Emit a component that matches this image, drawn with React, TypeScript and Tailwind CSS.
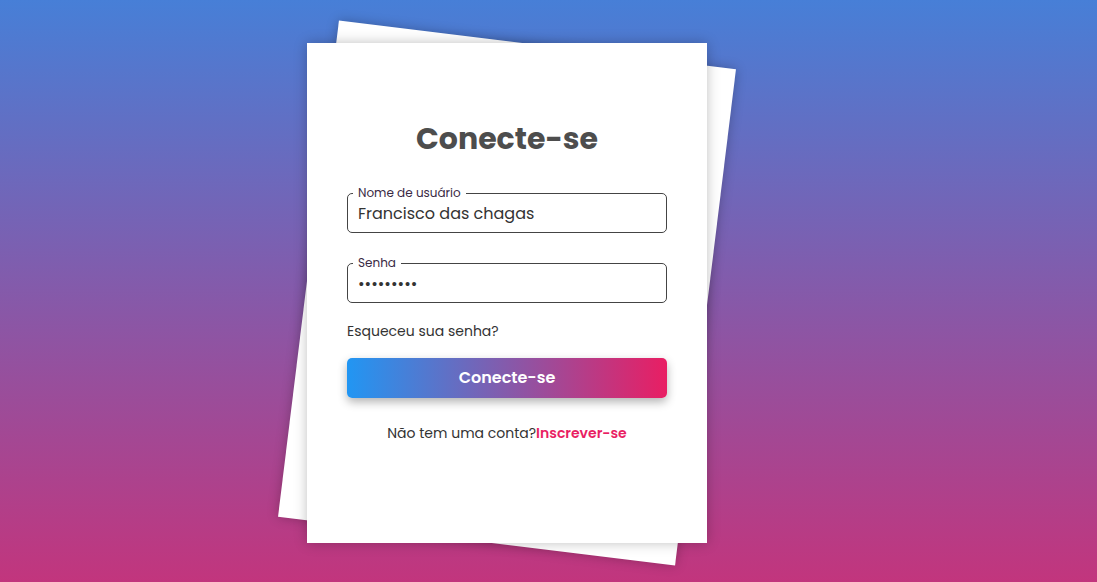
import { useState } from 'react'

const font = { fontFamily: 'Poppins, "Noto Sans", "DejaVu Sans", sans-serif' }

function Field({ label, type, value, onChange }: { label: string; type: string; value: string; onChange: (v: string) => void }) {
  return (
    <fieldset className="border border-[#444] rounded-[5px] px-[5px] pb-[6px] m-0">
      <legend className="px-[5px] text-[12px] leading-[14px] text-[#3a2a44]">{label}</legend>
      <input
        type={type}
        value={value}
        onChange={e => onChange(e.target.value)}
        className="w-full h-[26px] px-[5px] text-[16px] text-[#333] outline-none bg-transparent"
        style={font}
      />
    </fieldset>
  )
}

export default function App() {
  const [user, setUser] = useState('Francisco das chagas')
  const [pass, setPass] = useState('123456789')

  return (
    <div
      className="h-screen w-full flex items-center justify-center pr-[83px] pt-[4px] bg-linear-to-b/srgb from-[#477fd7] to-[#c2357d]"
      style={font}
    >
      <div className="relative w-[400px] h-[500px]">
        <div className="absolute inset-0 bg-white rotate-[7deg] shadow-[0_0_12px_rgba(0,0,0,0.25)]" />
        <div className="relative h-full bg-white shadow-[0_0_12px_rgba(0,0,0,0.25)] px-[40px] pt-[78px]">
          <h1 className="text-center text-[30px] leading-[36px] font-bold text-[#4d4d4d]">Conecte-se</h1>

          <form className="mt-[29px]" onSubmit={e => e.preventDefault()}>
            <Field label="Nome de usuário" type="text" value={user} onChange={setUser} />
            <div className="mt-[23px]">
              <Field label="Senha" type="password" value={pass} onChange={setPass} />
            </div>

            <a href="#" className="block mt-[18px] text-[14px] leading-[20px] text-[#333]">Esqueceu sua senha?</a>

            <button
              type="submit"
              className="mt-[17px] w-full h-[40px] rounded-[5px] bg-linear-to-r/srgb from-[#2196f3] to-[#e91e63] text-white text-[16px] font-semibold shadow-[0_4px_10px_rgba(0,0,0,0.3)]"
            >
              Conecte-se
            </button>

            <p className="mt-[25px] text-center text-[14px] leading-[20px] text-[#333]">
              Não tem uma conta?<a href="#" className="text-[#e91e63] font-semibold">Inscrever-se</a>
            </p>
          </form>
        </div>
      </div>
    </div>
  )
}
